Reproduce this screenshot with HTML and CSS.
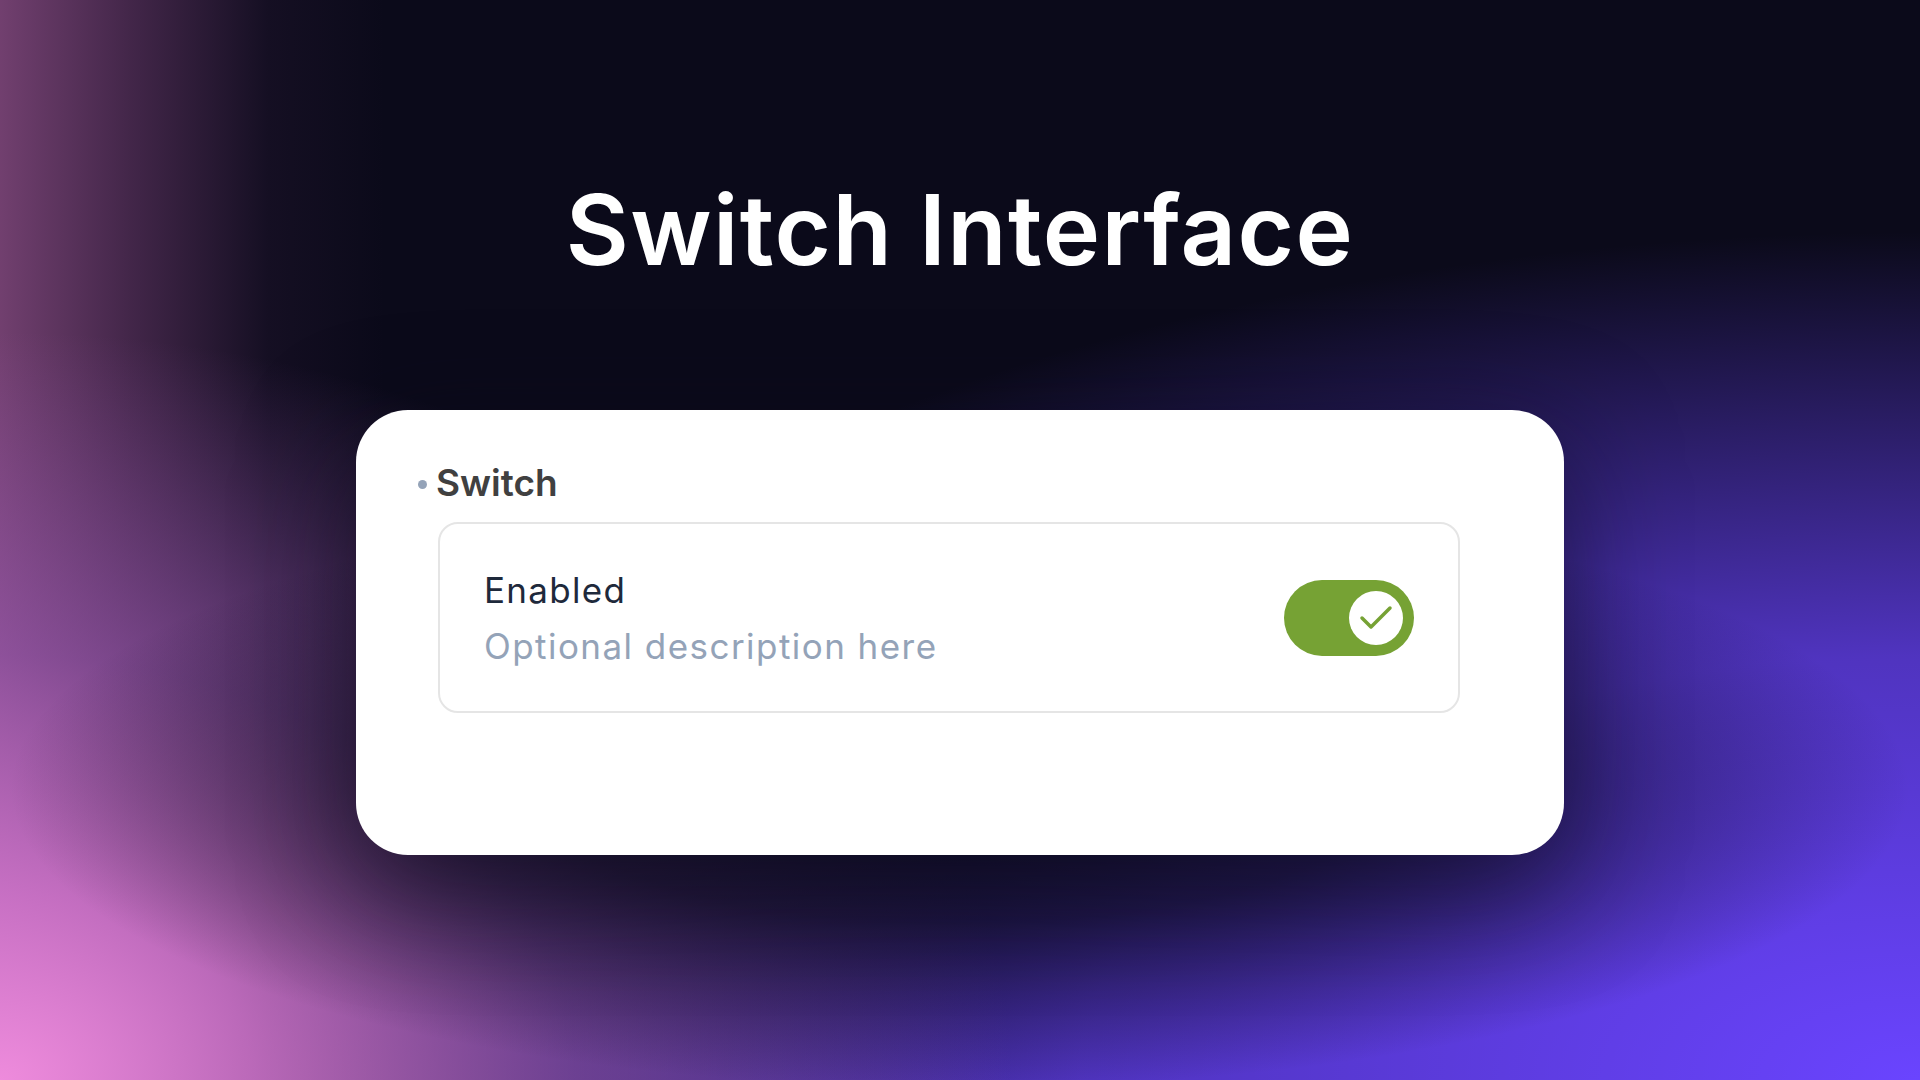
FILE: index.html
```html
<!DOCTYPE html>
<html lang="en">
<head>
<meta charset="utf-8">
<title>Switch Interface</title>
<link rel="stylesheet" href="styles.css">
</head>
<body>
<main class="stage">
  <h1 class="title">Switch Interface</h1>
  <section class="card">
    <div class="label"><span class="dot"></span><span>Switch</span></div>
    <div class="row">
      <div class="texts">
        <div class="row-title">Enabled</div>
        <div class="row-desc">Optional description here</div>
      </div>
      <div class="toggle" role="switch" aria-checked="true">
        <span class="knob">
          <svg width="54" height="54" viewBox="0 0 54 54"><polyline points="13,27 22,36 41,17" fill="none" stroke="#76a234" stroke-width="3.5" stroke-linecap="round" stroke-linejoin="round"/></svg>
        </span>
      </div>
    </div>
  </section>
</main>
</body>
</html>
```

FILE: styles.css
```css
html, body {
  margin: 0;
  padding: 0;
  width: 1920px;
  height: 1080px;
  overflow: hidden;
}
body {
  background-color: #0b0a1a;
  background-image:
    radial-gradient(ellipse 950px 300px at 50% 73%, rgba(11,10,26,0.95) 0%, rgba(11,10,26,0.7) 45%, rgba(11,10,26,0) 100%),
    radial-gradient(ellipse 1150px 850px at 0% 100%, #ee8bdc 0%, rgba(214,120,210,0.85) 22%, rgba(165,95,190,0.55) 50%, rgba(130,70,160,0) 88%),
    linear-gradient(90deg, rgba(122,68,118,0.92) 0%, rgba(110,60,110,0.55) 7%, rgba(60,35,70,0.2) 14%, rgba(11,10,26,0) 20%),
    radial-gradient(ellipse 2100px 1060px at 100% 100%, #6a44ff 0%, rgba(106,68,255,0.72) 40%, rgba(106,68,255,0.33) 62%, rgba(106,68,255,0) 80%);
  font-family: "Inter", "Liberation Sans", sans-serif;
}
.stage {
  display: flex;
  flex-direction: column;
  align-items: center;
  padding-top: 181px;
}
.title {
  margin: 0;
  font-family: "Inter", sans-serif;
  font-weight: 600;
  font-size: 97px;
  line-height: 97px;
  color: #ffffff;
  letter-spacing: 1.4px;
}
.card {
  margin-top: 132px;
  width: 1208px;
  height: 445px;
  box-sizing: border-box;
  background: #ffffff;
  border-radius: 52px;
  padding: 51px 0 0 62px;
  box-shadow: 0 30px 110px rgba(11,10,26,0.6);
}
.label {
  display: flex;
  align-items: center;
  font-weight: 600;
  font-size: 37px;
  line-height: 44px;
  color: #404040;
  height: 44px;
}
.dot {
  width: 9px;
  height: 9px;
  border-radius: 50%;
  background: #94a3b8;
  margin-right: 9px;
  margin-top: 2px;
}
.row {
  margin-top: 17px;
  margin-left: 20px;
  width: 1022px;
  height: 191px;
  box-sizing: border-box;
  border: 2px solid #e5e5e5;
  border-radius: 20px;
  padding: 0 44px;
  display: flex;
  align-items: center;
  justify-content: space-between;
}
.texts {
  display: flex;
  flex-direction: column;
  gap: 15px;
  padding-top: 1px;
}
.row-title {
  font-size: 35px;
  line-height: 41px;
  font-weight: 400;
  color: #1e293b;
  letter-spacing: 1.3px;
}
.row-desc {
  font-size: 35px;
  line-height: 41px;
  font-weight: 400;
  color: #94a3b8;
  letter-spacing: 1.45px;
}
.toggle {
  width: 130px;
  height: 76px;
  border-radius: 38px;
  background: #76a234;
  display: flex;
  align-items: center;
  justify-content: flex-end;
  padding-right: 11px;
  box-sizing: border-box;
}
.knob {
  width: 54px;
  height: 54px;
  border-radius: 50%;
  background: #ffffff;
  display: block;
}
.knob svg {
  display: block;
}
```
